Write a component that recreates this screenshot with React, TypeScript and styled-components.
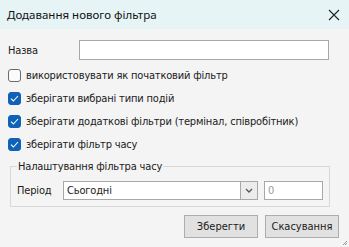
import React, { useState } from 'react';
import styled, { createGlobalStyle } from 'styled-components';

const GlobalStyle = createGlobalStyle`
  html, body {
    margin: 0;
    padding: 0;
    background: #f4f4f4;
  }
  * {
    box-sizing: border-box;
  }
`;

const Dialog = styled.div`
  width: 349px;
  height: 247px;
  background: #f4f4f4;
  display: flex;
  flex-direction: column;
  position: relative;
  font-family: 'DejaVu Sans Condensed', 'Liberation Sans', sans-serif;
  font-size: 11px;
  letter-spacing: -0.17px;
  color: #1a1a1a;
  overflow: hidden;
`;

const TitleBar = styled.div`
  height: 29px;
  background: #e6f4f6;
  display: flex;
  align-items: center;
  justify-content: space-between;
  padding: 0 5px 0 7px;
`;

const Title = styled.span`
  font-family: 'Noto Sans', 'Open Sans', sans-serif;
  font-size: 11.5px;
  letter-spacing: 0;
  color: #111;
`;

const CloseButton = styled.button`
  border: none;
  background: transparent;
  width: 20px;
  height: 20px;
  padding: 0;
  display: flex;
  align-items: center;
  justify-content: center;
  cursor: pointer;
`;

const Body = styled.div`
  display: flex;
  flex-direction: column;
  padding: 11px 20px 0 8px;
`;

const NameRow = styled.div`
  display: flex;
  align-items: center;
  height: 20px;
  margin-bottom: 4px;
`;

const Label = styled.span<{ width: number }>`
  width: ${p => p.width}px;
  flex-shrink: 0;
`;

const TextInput = styled.input`
  flex: 1;
  height: 20px;
  border: 1px solid #a8a8a8;
  background: #fff;
  font: inherit;
  padding: 0 4px;
  outline: none;
`;

const CheckRow = styled.label`
  display: flex;
  align-items: center;
  gap: 5px;
  height: 23px;
  cursor: pointer;
`;

const Box = styled.span<{ checked: boolean }>`
  width: 13px;
  height: 13px;
  border-radius: 3px;
  flex-shrink: 0;
  display: flex;
  align-items: center;
  justify-content: center;
  background: ${p => (p.checked ? '#0f62b8' : '#fbfbfb')};
  border: 1px solid ${p => (p.checked ? '#0f62b8' : '#6a6a6a')};
`;

const GroupBox = styled.fieldset`
  margin: 4px 0 0 2px;
  padding: 8px 6px 6px 6px;
  border: 1px solid #d8d8d8;
  display: flex;
  align-items: center;
`;

const Legend = styled.legend`
  padding: 0 1px;
  margin-left: 0;
  font-size: 11px;
`;

const Combo = styled.div`
  width: 195px;
  height: 19px;
  border: 1px solid #a8a8a8;
  background: #fff;
  display: flex;
  align-items: stretch;
`;

const ComboText = styled.span`
  flex: 1;
  padding: 0 3px;
  display: flex;
  align-items: center;
`;

const ComboArrow = styled.span`
  width: 17px;
  border-left: 1px solid #a8a8a8;
  background: #ececec;
  display: flex;
  align-items: center;
  justify-content: center;
`;

const NumberInput = styled.input`
  width: 59px;
  height: 19px;
  margin-left: 6px;
  border: 1px solid #a8a8a8;
  background: #fff;
  font: inherit;
  color: #9a9a9a;
  padding: 0 3px;
  outline: none;
`;

const Footer = styled.div`
  display: flex;
  justify-content: flex-end;
  gap: 7px;
  padding: 8px 10px 0 0;
`;

const Button = styled.button`
  width: 74px;
  height: 23px;
  border: 1px solid #adadad;
  background: #e1e1e1;
  font: inherit;
  color: #1a1a1a;
  padding: 0;
`;

const Grip = styled.svg`
  position: absolute;
  right: 1px;
  bottom: 1px;
`;

const options = [
  { key: 'initial', text: 'використовувати як початковий фільтр', checked: false },
  { key: 'types', text: 'зберігати вибрані типи подій', checked: true },
  { key: 'extra', text: 'зберігати додаткові фільтри (термінал, співробітник)', checked: true },
  { key: 'time', text: 'зберігати фільтр часу', checked: true },
];

const Check = () => (
  <svg width="9" height="7" viewBox="0 0 9 7">
    <path d="M1 3.6 L3.4 6 L8 1" fill="none" stroke="#fff" strokeWidth="1.1" />
  </svg>
);

export default function App() {
  const [state, setState] = useState(options.map(o => o.checked));

  return (
    <Dialog>
      <GlobalStyle />
      <TitleBar>
        <Title>Додавання нового фільтра</Title>
        <CloseButton>
          <svg width="12" height="12" viewBox="0 0 12 12">
            <path d="M1 1 L11 11 M11 1 L1 11" stroke="#222" strokeWidth="1.1" />
          </svg>
        </CloseButton>
      </TitleBar>
      <Body>
        <NameRow>
          <Label width={71}>Назва</Label>
          <TextInput />
        </NameRow>
        {options.map((o, i) => (
          <CheckRow
            key={o.key}
            onClick={() => setState(s => s.map((v, j) => (j === i ? !v : v)))}
          >
            <Box checked={state[i]}>{state[i] && <Check />}</Box>
            {o.text}
          </CheckRow>
        ))}
        <GroupBox>
          <Legend>Налаштування фільтра часу</Legend>
          <Label width={46}>Період</Label>
          <Combo>
            <ComboText>Сьогодні</ComboText>
            <ComboArrow>
              <svg width="8" height="5" viewBox="0 0 8 5">
                <path d="M1 1 L4 4 L7 1" fill="none" stroke="#555" strokeWidth="1.3" />
              </svg>
            </ComboArrow>
          </Combo>
          <NumberInput defaultValue="0" />
        </GroupBox>
      </Body>
      <Footer>
        <Button>Зберегти</Button>
        <Button>Скасування</Button>
      </Footer>
      <Grip width="6" height="6" viewBox="0 0 6 6">
        <path d="M5 1 L1 5 M5 3 L3 5" stroke="#999" strokeWidth="1" />
      </Grip>
    </Dialog>
  );
}
